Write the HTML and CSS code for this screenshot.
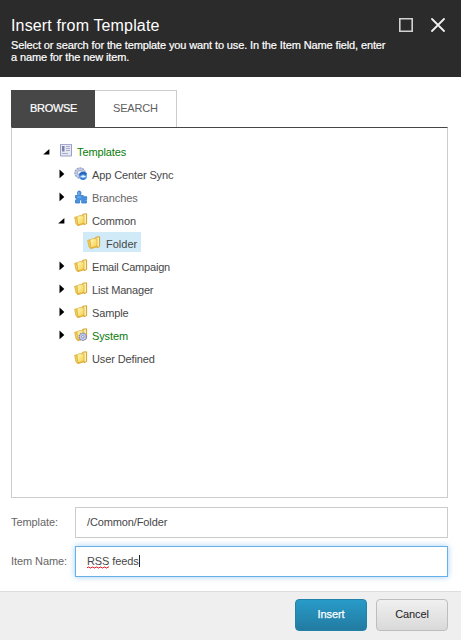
FILE: index.html
```html
<!DOCTYPE html>
<html lang="en">
<head>
<meta charset="utf-8">
<title>Insert from Template</title>
<link rel="stylesheet" href="styles.css">
</head>
<body>
<svg class="defs" width="0" height="0" aria-hidden="true">
  <defs>
    <linearGradient id="gold" x1="0" y1="0" x2="1" y2="1"><stop offset="0" stop-color="#fffbb5"/><stop offset="1" stop-color="#f3cb48"/></linearGradient>
    <symbol id="folder" viewBox="0 0 14 14">
      <path d="M8.2 2.6 8.8 1.2 12.6.8V10.6L10 11.6Z" fill="#fdf0b0" stroke="#d3a02a"/>
      <path d="M.6 4.2 3 3.8 4 12.6 2 11Z" fill="#f3ce58" stroke="#d9aa35" stroke-width=".7"/>
      <path d="M3 4 5.5 2.6 10 2.8V10.8L4 12.7Z" fill="url(#gold)" stroke="#deb043" stroke-width=".8"/>
      <path d="M4 11.9 10 10.3" stroke="#e0a727" stroke-width=".9"/>
    </symbol>
    <symbol id="gear" viewBox="0 0 10 10">
      <circle cx="5" cy="5" r="3.8" fill="#b4bbe0" stroke="#8189b6" stroke-width="1.4" stroke-dasharray="1.7 .7"/>
      <circle cx="5" cy="5" r="3" fill="#c7cdea"/><circle cx="5" cy="5" r="1.3" fill="#f4f5fc" stroke="#7a82b0" stroke-width=".8"/>
    </symbol>
    <symbol id="closed" viewBox="0 0 6 10"><path d="M.5.5 5.3 4.9.5 9.3Z"/></symbol>
    <symbol id="open" viewBox="0 0 7 6"><path d="M6.4 0V5.5H.2Z"/></symbol>
  </defs>
</svg>
<div class="dialog">
  <header class="header">
    <div class="heading">
      <h1>Insert from Template</h1>
      <p>Select or search for the template you want to use. In the Item Name field, enter<br>a name for the new item.</p>
    </div>
    <div class="window-actions">
      <svg width="14" height="14" viewBox="0 0 14 14"><path d="M.8.8H13.2V13.2H.8Z" fill="none" stroke="#d2d2d2" stroke-width="1.6"/></svg>
      <svg width="14" height="14" viewBox="0 0 14 14"><path d="M1 1 13 13M13 1 1 13" stroke="#f0f0f0" stroke-width="1.8" stroke-linecap="round"/></svg>
    </div>
  </header>
  <main class="content">
    <nav class="tabs"><div class="tab active">BROWSE</div><div class="tab">SEARCH</div></nav>
    <section class="tree">
      <div class="row root"><span class="arrow"><svg class="open"><use href="#open"/></svg></span>
        <svg class="icon doc" viewBox="0 0 14 14"><path d="M1.5 1.5H12.5V13H1.5Z" fill="#e6e8f6" stroke="#9a9fc2"/><path d="M1 1.5H13" stroke="#a6aacd"/><path d="M3 3H5.5V8.5H3Z" fill="#7d82ad"/><path d="M7 3.5H11M7 5.5H11M7 7.5H11" stroke="#a6abcc"/><path d="M3 10.5H9" stroke="#a9adcd"/></svg><span class="label system">Templates</span></div>
      <div class="row"><span class="arrow"><svg class="closed"><use href="#closed"/></svg></span>
        <svg class="icon" viewBox="0 0 14 14"><circle cx="6" cy="6" r="5" fill="#c9cfe4" stroke="#9aa5c9" stroke-width="1.6" stroke-dasharray="2 .8"/><circle cx="6" cy="6" r="2.6" fill="#eef1fb" stroke="#9fa9cb"/><circle cx="9" cy="9" r="4" fill="#5a9be2"/><path d="M4.8 8.1C6 4.7 10 3.7 13 6.4L11.5 8.3C9.4 7 7.8 6.9 6.8 8.6Z" fill="#2466bd"/><path d="M6.2 9.3 9.3 8.2 12.2 9.5 9 10.8Z" fill="#e2f1ff"/><path d="M6 11.3Q9 14 12 11.2" fill="#2f73c8"/></svg><span class="label">App Center Sync</span></div>
      <div class="row"><span class="arrow"><svg class="closed"><use href="#closed"/></svg></span>
        <svg class="icon" viewBox="0 0 14 14"><path d="M1.5 5.5H4.2C2.7 3 3.5 1 5.2 1S7.7 3 6.2 5.5H9.3V8H10V6.7H12.7V9.7H10V10.7H12.5V13H7.7V10.8C7.5 9.4 5.8 9.4 5.6 10.8V13H1.5V10C3 10 3 8 1.5 8Z" fill="#4a92df" stroke="#3278c6" stroke-width=".8"/><path d="M4.9 2V5M3.2 7H7" stroke="#80bbf1"/></svg><span class="label muted">Branches</span></div>
      <div class="row"><span class="arrow"><svg class="open"><use href="#open"/></svg></span><svg class="icon"><use href="#folder"/></svg><span class="label">Common</span></div>
      <div class="row nested"><div class="selected"><svg class="icon"><use href="#folder"/></svg><span class="label">Folder</span></div></div>
      <div class="row"><span class="arrow"><svg class="closed"><use href="#closed"/></svg></span><svg class="icon"><use href="#folder"/></svg><span class="label tight">Email Campaign</span></div>
      <div class="row"><span class="arrow"><svg class="closed"><use href="#closed"/></svg></span><svg class="icon"><use href="#folder"/></svg><span class="label tight">List Manager</span></div>
      <div class="row"><span class="arrow"><svg class="closed"><use href="#closed"/></svg></span><svg class="icon"><use href="#folder"/></svg><span class="label">Sample</span></div>
      <div class="row"><span class="arrow"><svg class="closed"><use href="#closed"/></svg></span><svg class="icon" viewBox="0 0 14 14"><use href="#folder" width="14" height="14"/><use href="#gear" x="4" y="4" width="9.5" height="9.5"/></svg><span class="label system">System</span></div>
      <div class="row"><span class="arrow"></span><svg class="icon"><use href="#folder"/></svg><span class="label">User Defined</span></div>
    </section>
    <div class="field"><span class="field-label">Template:</span><div class="input"><span>/Common/Folder</span></div></div>
    <div class="field"><span class="field-label">Item Name:</span><div class="input focused"><span class="misspelled">RSS<svg class="squiggle" width="22" height="3" viewBox="0 0 22 3"><path d="M0 2 1 1 2 1 3 2 4 2 5 1 6 1 7 2 8 2 9 1 10 1 11 2 12 2 13 1 14 1 15 2 16 2 17 1 18 1 19 2 20 2 21 1 22 1" fill="none" stroke="#e8202c"/></svg></span><span>&nbsp;feeds</span><i class="caret"></i></div></div>
  </main>
  <footer class="footer"><div class="button primary">Insert</div><div class="button">Cancel</div></footer>
</div>
</body>
</html>
```
FILE: styles.css
```css
* { box-sizing: border-box; }
body { margin: 0; background: #fff; font: 11px/12px "Liberation Sans", Arial, sans-serif; color: #474747; }
.defs { position: absolute; }
svg { display: block; flex: none; }
.dialog { width: 461px; height: 640px; display: flex; flex-direction: column; overflow: hidden; }
.header { height: 77px; flex: none; background: #2b2b2b; color: #fff; display: flex; justify-content: space-between; padding: 16px 16px 0 11px; }
h1 { margin: 0; font-size: 16px; line-height: 19px; font-weight: 400; white-space: nowrap; letter-spacing: .15px; }
p { margin: 4px 0 0; white-space: nowrap; letter-spacing: -.12px; -webkit-text-stroke: .2px #fff; }
.window-actions { display: flex; gap: 18px; padding-top: 2px; }
.content { flex: 1; padding: 13px 13px 0 11px; }
.tabs { display: flex; height: 37px; }
.tab { width: 82px; border: 1px solid #ccc; border-width: 1px 1px 0 0; padding-left: 18px; color: #5e5e5e; line-height: 34px; letter-spacing: -.2px; }
.tab.active { width: 84px; border: 0; padding-left: 19px; background: #474747; color: #fff; line-height: 36px; letter-spacing: -.3px; -webkit-text-stroke: .2px #fff; }
.tree { height: 371px; border: 1px solid #ccc; border-top-color: #474747; padding: 13px 0 0 46px; }
.row { display: flex; align-items: center; height: 23px; line-height: 23px; }
.row.root { margin-left: -15px; }
.row.nested { padding-left: 25px; align-items: flex-start; }
.arrow { width: 16px; height: 23px; flex: none; padding-top: 5px; }
.closed { width: 6px; height: 10px; margin-left: 1px; }
.open { width: 7px; height: 6px; margin-top: 3px; }
.icon { width: 14px; height: 14px; margin: -4px 4px 0 0; }
.doc { margin-top: -5px; }
.label { white-space: nowrap; letter-spacing: -.12px; }
.label.tight { letter-spacing: -.19px; }
.system { color: #087c08; }
.muted { color: #666; }
.selected { height: 20px; width: 58px; margin-top: -1px; background: #d0ebf7; display: flex; align-items: flex-start; padding-left: 4px; }
.selected .icon { margin: 4px 5px 0 0; }
.selected .label { margin-top: 1px; letter-spacing: 0; }
.field { display: flex; align-items: center; height: 31px; margin-top: 9px; }
.field + .field { margin-top: 8px; }
.field-label { width: 64px; padding-bottom: 1px; color: #666; white-space: nowrap; letter-spacing: -.08px; }
.input { flex: 1; height: 31px; border: 1px solid #ccc; display: flex; align-items: center; padding: 0 0 1px 11px; letter-spacing: -.12px; }
.focused { border-color: #66afe9; box-shadow: 0 0 6px rgba(102,175,233,.6); }
.misspelled { position: relative; }
.squiggle { position: absolute; left: 0; top: 11px; }
.caret { width: 1px; height: 12px; background: #222; }
.footer { height: 49px; flex: none; background: #efefef; border-top: 1px solid #ddd; display: flex; justify-content: flex-end; gap: 9px; padding: 7px 13px 0 0; }
.button { width: 72px; height: 32px; border: 1px solid #bdbdbd; border-radius: 4px; background: linear-gradient(#f0f0f0, #d9d9d9); color: #222; text-align: center; line-height: 29px; letter-spacing: -.1px; }
.primary { color: #fff; border-color: #2281a8; background: linear-gradient(#289bc8, #227ba1); -webkit-text-stroke: .25px #fff; }
```
